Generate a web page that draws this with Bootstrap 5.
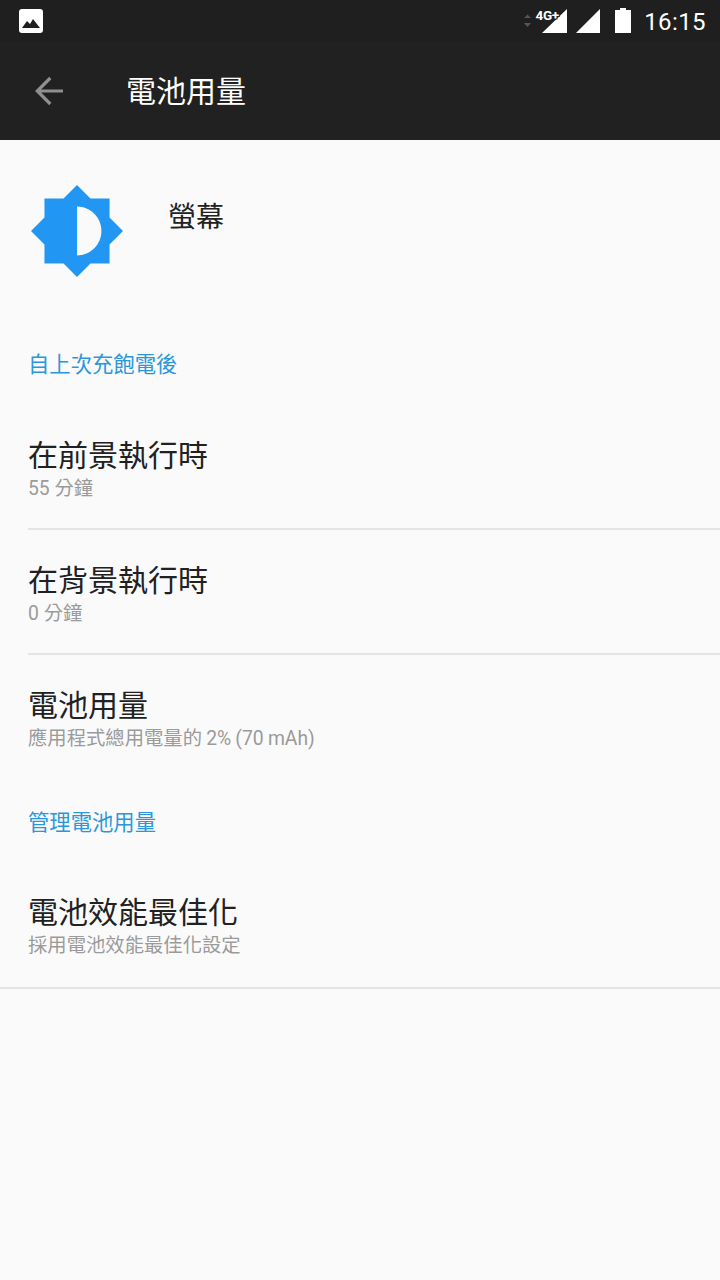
<!DOCTYPE html>
<html lang="zh-Hant"><head><meta charset="utf-8">
<link href="https://cdn.jsdelivr.net/npm/bootstrap@5.3.0/dist/css/bootstrap.min.css" rel="stylesheet">
<style>
html,body{height:1280px;overflow:hidden}
body{background:#fafafa;font-family:Roboto,"Noto Sans CJK TC",sans-serif;width:720px}
.stat{height:42px;background:#1f1f1f;padding:0 14px 0 19px}
.clock{color:#fff;font-size:24px;line-height:42px;letter-spacing:.4px;margin-left:10px;padding-top:2px}
.appbar{height:98px;background:#212121;padding-left:31px}
.apptitle{color:#fff;font-size:30px;margin-left:61px;line-height:1;font-weight:400;margin-bottom:0;padding-top:2px}
.hero{height:185px;padding:45px 0 0 31px}
.heroname{font-size:28px;line-height:1;color:#212121;margin:19px 0 0 45px}
.sect{color:#2a97dc;font-size:21.33px;line-height:30px;padding-left:28px}
.s1{margin-top:25px}
.rowitem{padding-left:28px}
.rowinner{height:125px;padding-top:33px;border-bottom:2px solid #e4e4e4}
.firstrow{height:150px;padding-top:58px}
.rt{font-size:30px;line-height:36px;color:#212121}
.rd{font-size:19.33px;line-height:30px;color:#9b9b9b}
.tighter{word-spacing:-.6px}
.noline{border-bottom:0;height:auto;padding-bottom:0}
.s2{margin-top:54px}
.fullrow{border-bottom:2px solid #e4e4e4;height:151px;padding:57px 0 0 28px}
</style></head><body>
<div class="stat d-flex align-items-center">
<svg width="24" height="24" viewBox="0 0 24 24"><rect width="24" height="24" rx="3" fill="#fff"/><path d="M3 19l5-7 3 3 3-5 7 9z" fill="#1f1f1f"/></svg>
<div class="flex-grow-1"></div>
<svg width="115" height="42" viewBox="520 0 115 42"><path d="M525 18l3.500-3.500 3.500 3.500zM525 23h7l-3.500 4z" fill="#555"/><path d="M568 9v24h-25z" fill="#fff"/><text x="536.500" y="20" font-family="Roboto" font-weight="700" font-size="13.500" letter-spacing="-.3" fill="#fff" stroke="#1f1f1f" stroke-width="2" paint-order="stroke">4G+</text><path d="M601 9v24h-24z" fill="#fff"/><path d="M621 8h6v2h5v23h-16V10h5z" fill="#fff"/></svg>
<span class="clock">16:15</span>
</div>
<div class="appbar d-flex align-items-center">
<svg width="34" height="34" viewBox="0 0 34 34"><path d="M32 17H7M19.300 4L6.300 17l13 13" fill="none" stroke="#8f8f8f" stroke-width="3.2"/></svg>
<h1 class="apptitle">電池用量</h1>
</div>
<div class="hero d-flex">
<svg width="92" height="92" viewBox=".69 .69 22.62 22.62" class="flex-shrink-0"><path d="M20 15.310L23.310 12 20 8.690V4h-4.690L12 .69 8.690 4H4v4.690L.69 12 4 15.310V20h4.690L12 23.310 15.310 20H20z" fill="#2196f3"/><path d="M12 6v12c3.310 0 6-2.690 6-6s-2.690-6-6-6z" fill="#fafafa"/></svg>
<div class="heroname">螢幕</div>
</div>
<div class="sect s1">自上次充飽電後</div>
<div class="rowitem"><div class="rowinner firstrow"><div class="rt">在前景執行時</div><div class="rd">55 分鐘</div></div></div>
<div class="rowitem"><div class="rowinner"><div class="rt">在背景執行時</div><div class="rd">0 分鐘</div></div></div>
<div class="rowitem"><div class="rowinner noline"><div class="rt">電池用量</div><div class="rd tighter">應用程式總用電量的 2% (70 mAh)</div></div></div>
<div class="sect s2">管理電池用量</div>
<div class="fullrow"><div class="rt">電池效能最佳化</div><div class="rd">採用電池效能最佳化設定</div></div>
</body></html>
